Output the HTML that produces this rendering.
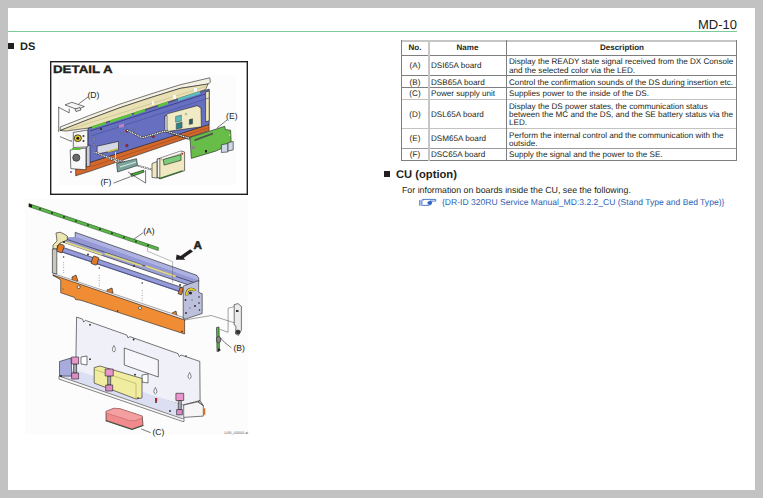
<!DOCTYPE html>
<html><head><meta charset="utf-8">
<style>
html,body{margin:0;padding:0;}
body{text-rendering:geometricPrecision;width:763px;height:498px;background:#c2c2c2;position:relative;overflow:hidden;font-family:"Liberation Sans",sans-serif;color:#231f20;}
#page{position:absolute;left:8px;top:8px;width:747px;height:482px;background:#fff;}
.a{position:absolute;white-space:nowrap;}
.hl{position:absolute;}
.t{position:absolute;white-space:nowrap;font-size:8.15px;line-height:10px;}
.tb{position:absolute;white-space:nowrap;font-size:8px;font-weight:bold;line-height:10px;}
</style></head><body>
<div id="page"></div>
<!-- header -->
<div class="a" style="left:698px;top:15px;font-size:13px;line-height:20px;">MD-10</div>
<div class="hl" style="left:8px;top:31px;width:729px;height:1px;background:#7ccb9c;"></div>

<!-- DS heading -->
<div class="hl" style="left:8px;top:43px;width:6px;height:6px;background:#231f20;"></div>
<div class="a" style="left:20px;top:39px;font-size:11px;font-weight:bold;line-height:16px;">DS</div>

<!-- table lines -->
<div class="hl" style="left:401px;top:40px;width:336px;height:2px;background:#c6c6c6;"></div>
<div class="hl" style="left:401px;top:55px;width:336px;height:1px;background:#7e7e7e;"></div>
<div class="hl" style="left:401px;top:75px;width:336px;height:1px;background:#7e7e7e;"></div>
<div class="hl" style="left:401px;top:87px;width:336px;height:1px;background:#7e7e7e;"></div>
<div class="hl" style="left:401px;top:99px;width:336px;height:1px;background:#c2c2c2;"></div>
<div class="hl" style="left:401px;top:128px;width:336px;height:1px;background:#c2c2c2;"></div>
<div class="hl" style="left:401px;top:148px;width:336px;height:1px;background:#9a9a9a;"></div>
<div class="hl" style="left:401px;top:160px;width:336px;height:1px;background:#7e7e7e;"></div>
<div class="hl" style="left:401px;top:40px;width:1px;height:121px;background:#7e7e7e;"></div>
<div class="hl" style="left:428px;top:40px;width:2px;height:121px;background:#c6c6c6;"></div>
<div class="hl" style="left:506px;top:40px;width:1px;height:121px;background:#7e7e7e;"></div>
<div class="hl" style="left:736px;top:40px;width:1px;height:121px;background:#7e7e7e;"></div>

<!-- table text -->
<div class="tb" style="left:401px;width:28px;text-align:center;top:43px;">No.</div>
<div class="tb" style="left:429px;width:77px;text-align:center;top:43px;">Name</div>
<div class="tb" style="left:507px;width:230px;text-align:center;top:43px;">Description</div>

<div class="t" style="left:401px;width:28px;text-align:center;top:61px;">(A)</div>
<div class="t" style="left:431px;top:61px;">DSI65A board</div>
<div class="t" style="left:509px;top:58px;line-height:8.8px;">Display the READY state signal received from the DX Console<br>and the selected color via the LED.</div>

<div class="t" style="left:401px;width:28px;text-align:center;top:78px;">(B)</div>
<div class="t" style="left:431px;top:78px;">DSB65A board</div>
<div class="t" style="left:509px;top:78px;">Control the confirmation sounds of the DS during insertion etc.</div>

<div class="t" style="left:401px;width:28px;text-align:center;top:89px;">(C)</div>
<div class="t" style="left:431px;top:89px;">Power supply unit</div>
<div class="t" style="left:509px;top:89px;">Supplies power to the inside of the DS.</div>

<div class="t" style="left:401px;width:28px;text-align:center;top:110px;">(D)</div>
<div class="t" style="left:431px;top:110px;">DSL65A board</div>
<div class="t" style="left:509px;top:102.5px;line-height:8.3px;">Display the DS power states, the communication status<br>between the MC and the DS, and the SE battery status via the<br>LED.</div>

<div class="t" style="left:401px;width:28px;text-align:center;top:134px;">(E)</div>
<div class="t" style="left:431px;top:134px;">DSM65A board</div>
<div class="t" style="left:509px;top:131.5px;line-height:8.3px;">Perform the internal control and the communication with the<br>outside.</div>

<div class="t" style="left:401px;width:28px;text-align:center;top:150px;">(F)</div>
<div class="t" style="left:431px;top:150px;">DSC65A board</div>
<div class="t" style="left:509px;top:150px;">Supply the signal and the power to the SE.</div>

<!-- CU section -->
<div class="hl" style="left:384px;top:171px;width:6px;height:6px;background:#231f20;"></div>
<div class="a" style="left:396px;top:167px;font-size:11.2px;font-weight:bold;line-height:16px;">CU (option)</div>
<div class="a" style="left:402px;top:184px;font-size:8.8px;line-height:12px;">For information on boards inside the CU, see the following.</div>
<div class="a" style="left:442px;top:196px;font-size:8.55px;line-height:12px;color:#2a62b5;">{DR-ID 320RU Service Manual_MD:3.2.2_CU (Stand Type and Bed Type)}</div>


<svg style="position:absolute;left:418px;top:198px" width="20" height="10" viewBox="0 0 20 10">
<rect x="1.1" y="1.9" width="3.4" height="5.9" fill="#b4c6ea"/>
<path d="M1.6 2.2 V7.6 M3.9 1.7 V8" stroke="#3f74cc" stroke-width="0.7" fill="none"/>
<path d="M4.6 1.4 H17.8 V3.1 H11.6" stroke="#3a6ec8" stroke-width="0.9" fill="none"/>
<path d="M4.6 1.4 L6 2.2 M4.6 7.4 H10.8 Q13.8 6.8 13.8 4 L12.2 3" stroke="#3a6ec8" stroke-width="0.9" fill="none"/>
<ellipse cx="11.6" cy="4.9" rx="2.2" ry="1.9" fill="#2f66c4"/>
</svg>
<!-- illustrations -->
<svg style="position:absolute;left:0;top:0" width="763" height="498" viewBox="0 0 763 498">
<rect x="58" y="75" width="178" height="110" fill="#fcfcfc"/>
<rect x="25" y="199" width="223" height="235" fill="#fcfcfc"/>
<g stroke="#1e1e1e" stroke-width="0.6" stroke-linejoin="round">
<!-- DETAIL A -->
<!-- bracket lines left -->
<polyline points="58.1,107 69.2,112.8 69.2,108.6" fill="none"/>
<line x1="58.7" y1="107" x2="58.7" y2="132"/>
<polyline points="60,136.6 71.4,141.4 71.4,132" fill="none"/>
<!-- D plate -->
<polygon points="65,104.9 71.8,102.3 84.4,106.5 77.5,109.6" fill="#f4f4f4"/>
<polygon points="75,109 80,107.5 81,110 76,111.5" fill="#e8e8e8"/>
<line x1="78.6" y1="103.9" x2="88" y2="97"/>
<!-- white frame under lid left -->
<polygon points="62,131 88,122 88,162 84,150 66,136" fill="#f6f6f6" stroke="none"/>
<!-- orange strip -->
<polygon points="75.7,169.2 90.6,162 209,124.2 209.2,130.5 90.6,171.1 75.7,175.8" fill="#d3682c"/>
<line x1="90.6" y1="166.8" x2="209" y2="127.5" stroke="#9a4a18" stroke-width="0.6"/>
<!-- blue panel -->
<polygon points="88,128.1 209.2,89.1 209.2,124.5 90.6,162.2 88,163" fill="#6770c0"/>
<polygon points="86.5,146 90,145 90,166 86.5,167" fill="#c8cce0"/>
<line x1="90" y1="131" x2="205" y2="94" stroke="#3a4490" stroke-width="1"/>
<!-- right yellow strip -->
<polygon points="205.6,92 209.2,91 209.2,120.8 205.6,121.8" fill="#efe8b8"/>
<!-- lid -->
<polygon points="60.2,127 89.6,115.4 120,104.1 150,94.2 180,84.8 209.8,77.8 210.4,82.2 208,84 180,88.4 150,97.8 120,107.7 89.6,119 60.2,130.5" fill="#f4f1e2"/>
<polygon points="60.2,130.5 89.6,119 120,107.7 150,97.8 180,88.4 208,84 205.6,89.5 88,128.1 66,131" fill="#e9e1b4"/>
<line x1="70" y1="129" x2="206" y2="86.5" stroke="#b8ae80" stroke-width="0.5"/>
<g stroke="none" fill="#5cc43a">
<polygon points="92,126.2 106,121.7 106,124.3 92,128.8"/>
<polygon points="110,120.3 132,113.2 132,115.8 110,122.9"/>
<polygon points="134,112.5 145,109 145,111.6 134,115.1"/>
<polygon points="158,104.8 168,101.6 168,104.2 158,107.4"/>
</g>
<polygon points="178,98.4 200,91.3 200,93.9 178,101" fill="#58c0c0" stroke="none"/>
<g stroke="none" fill="#f8f8f8">
<rect x="152" y="101" width="2" height="4"/><rect x="173" y="95" width="3" height="4"/><rect x="194" y="88" width="3" height="3.5"/>
</g>
<!-- window -->
<polygon points="97.1,146.2 118.5,141.4 118.5,149.8 97.1,154" fill="#d6d8e4"/>
<polygon points="108,151 118,148 118,149.8 108,152.6" fill="#c8c040" stroke="none"/>
<!-- red dots -->
<circle cx="127" cy="131" r="1.3" fill="#c02020" stroke="#222" stroke-width="0.4"/>
<line x1="91" y1="136" x2="209" y2="98" stroke="#4a52a0" stroke-width="0.7"/>
<g fill="#9a9ab0" stroke="#333" stroke-width="0.3"><circle cx="94" cy="139" r="1.2"/><circle cx="94" cy="145" r="1.1"/><circle cx="122" cy="133.5" r="0.9"/><circle cx="122" cy="143" r="0.9"/><circle cx="134" cy="129.5" r="0.9"/></g>
<circle cx="153.1" cy="136.5" r="1.3" fill="#c02020" stroke="#222" stroke-width="0.4"/>
<circle cx="126.9" cy="145.6" r="1.3" fill="#c02020" stroke="#222" stroke-width="0.4"/>
<circle cx="101" cy="129" r="1.1" fill="#3a2020" stroke="none"/>
<polygon points="119,125 124,123.5 124,127 119,128" fill="#c080c0" stroke="none"/>
<!-- left end block -->
<polygon points="73.3,132.4 87.7,130 87.7,146.9 73.3,147.5" fill="#f6f6f6"/>
<ellipse cx="77.8" cy="138.2" rx="3.6" ry="3.4" fill="#e8cc20" stroke="#222" stroke-width="0.8"/><circle cx="77.8" cy="138.2" r="1.5" fill="#2a1a1a" stroke="none"/><circle cx="83.5" cy="136" r="1" fill="#333" stroke="none"/><circle cx="83.5" cy="141" r="1" fill="#333" stroke="none"/>
<polygon points="70.2,149.9 85.9,148 85.9,169.8 70.8,168.6" fill="#f8f8f8"/>
<rect x="72" y="148" width="8.5" height="2" fill="#5cc03a" stroke="none"/>
<circle cx="76.3" cy="157.7" r="3.6" fill="#6a6a6a"/>
<circle cx="71" cy="172" r="0.9" fill="#6a4a8a" stroke="none"/>
<!-- cream power box -->
<polygon points="165,116 168,113.6 197.2,105.7 201,108 201.4,126.8 167,131.6" fill="#f0ebc4"/>
<polygon points="165,116 167,115.5 167,131.6 165,131" fill="#fafafa"/>
<polygon points="175.6,116.5 181.4,115 181.4,121 175.6,122.2" fill="#5fb8b8" stroke="#333" stroke-width="0.4"/>
<polygon points="176.2,123.5 182.1,122 182.1,128 176.2,129.3" fill="#2f7f88" stroke="#333" stroke-width="0.4"/>
<polygon points="189.3,119.6 192.6,118.8 192.6,123.8 189.3,124.6" fill="#2a5a60" stroke="#333" stroke-width="0.4"/>
<circle cx="186" cy="114" r="0.9" fill="none" stroke="#666" stroke-width="0.4"/>
<!-- cables -->
<polyline points="94.4,151.9 111.2,159.3 122,163" fill="none" stroke="#333" stroke-width="1.8"/>
<polyline points="94.4,151.9 111.2,159.3 122,163" fill="none" stroke="#fff" stroke-width="1.1" stroke-dasharray="1.2 0.6"/>
<polyline points="127,130.2 142.2,137.8 165,131 191.7,138.8" fill="none" stroke="#333" stroke-width="2"/>
<polyline points="127,130.2 142.2,137.8 165,131 191.7,138.8" fill="none" stroke="#fff" stroke-width="1.2" stroke-dasharray="1.2 0.6"/>
<polyline points="115.5,152 115.5,162" fill="none" stroke="#ddd" stroke-width="1"/>
<polyline points="104,156 130,163.5 157,171" fill="none" stroke="#444" stroke-width="1.8"/><polyline points="104,156 130,163.5 157,171" fill="none" stroke="#fff" stroke-width="1.1" stroke-dasharray="1.2 0.6"/>
<line x1="166" y1="132" x2="190" y2="140" stroke="#333" stroke-width="0.5"/>
<!-- green board E -->
<polygon points="190,137.5 224.7,126.3 225.4,129.6 230.6,130.2 231.3,144 215.5,151.2 191.3,158.4" fill="#68bd48"/>
<polygon points="194.5,139.3 213,132.6 213,134.6 194.5,141.3" fill="#4a5a4a" stroke="none"/>
<rect x="205" y="150" width="2" height="2.5" fill="#222" stroke="none"/>
<rect x="229" y="134" width="1.2" height="2" fill="#e0d040" stroke="none"/>
<rect x="192" y="146" width="3" height="3" fill="#888" stroke="none"/>
<polygon points="221.4,144.7 228,143.5 228,151.9 221.4,152.5" fill="#d0d8e8"/>
<polygon points="228,142.7 233.2,141.5 233.2,149.9 228,151" fill="#d0d8e8"/>
<line x1="217" y1="128" x2="227" y2="120"/>
<!-- board F -->
<polygon points="116.6,163.5 136.5,158.7 137.5,165.4 117.5,172" fill="#7aa49c"/>
<line x1="120" y1="167" x2="136" y2="162" stroke="#fff" stroke-width="0.8"/>
<polygon points="130.6,174.1 143.6,170.1 144.1,172.1 131.6,176.6" fill="#4cae3a"/>
<line x1="113.5" y1="183.1" x2="130.6" y2="176.6"/>
<polyline points="128,172 145.6,183.1 145.6,170.1" fill="none"/>
<!-- board D (cream w green) -->
<polygon points="152,163.5 157.3,161.5 157.3,178 152,177.5" fill="#efe8c0"/>
<polygon points="157.3,159.1 181,151 184.6,152 184.6,170.7 160.1,178.8 157.3,177.5" fill="#efe8c0"/>
<polygon points="157.3,159.1 159.8,158.4 159.8,177.9 157.3,177.5" fill="#f8f8f8"/>
<polygon points="161.5,157.8 181,151 182,153 161.5,160" fill="#ffffff" stroke="#777" stroke-width="0.4"/>
<polygon points="163.3,159.5 181,154.6 181,160.3 164.1,165.1" fill="#7ccc7c"/>
<rect x="181.5" y="153" width="1.6" height="1.6" fill="#c02020" stroke="none"/>
<line x1="159.3" y1="178.6" x2="182.6" y2="170.7" stroke="#2a6a2a" stroke-width="1.2"/>
</g>
<g font-family="Liberation Sans" font-size="8.6" fill="#231f20">
<text x="87.4" y="98">(D)</text>
<text x="226.1" y="119">(E)</text>
<text x="100.4" y="185">(F)</text>
</g>

<g stroke="#1e1e1e" stroke-width="0.6" stroke-linejoin="round">
<!-- SECOND IMAGE -->
<!-- green strip A -->
<polygon points="29,203.6 158.5,247.6 158.2,250.6 29,206.8" fill="#58b845" stroke="#1e3a1e" stroke-width="0.5"/>
<polygon points="28.8,203.8 32,204.8 32,207.6 28.8,206.8" fill="#1a1a1a" stroke="none"/>
<g fill="#1a2a1a" stroke="none" transform="translate(0,0.2)">
<circle cx="40" cy="208.7" r="0.9"/><circle cx="52" cy="212.8" r="0.9"/><circle cx="64" cy="216.8" r="0.9"/><circle cx="76" cy="220.9" r="0.9"/><circle cx="88" cy="224.9" r="0.9"/><circle cx="100" cy="229" r="0.9"/><circle cx="112" cy="233" r="0.9"/><circle cx="124" cy="237.1" r="0.9"/><circle cx="136" cy="241.2" r="0.9"/><circle cx="148" cy="245.2" r="0.9"/>
</g>
<line x1="133.9" y1="239.1" x2="143.1" y2="232.8"/>
<!-- chassis white interior -->
<polygon points="52,240 75,232 198.7,277 202,294 184.6,320.6 53,274.5" fill="#fdfdfd" stroke="none"/>
<!-- back lavender flange bar -->
<polygon points="75.2,232.3 196.8,275.3 198.7,278 198.7,282 75.2,239" fill="#aeb2e2"/>
<line x1="75.5" y1="237.6" x2="196.8" y2="280.6" stroke="#6a70b8" stroke-width="0.8"/>
<!-- upper rod -->
<polygon points="58.4,237.5 75.2,237 196.8,280 196.8,287.8 58.4,240.5" fill="#9498d4" stroke="none"/>
<polygon points="58.4,236.5 196.8,283.5 196.8,287.8 58.4,240.5" fill="#9ca2dc"/>
<!-- yellow rail -->
<polygon points="64.7,241 102.4,253.6 102.4,255.6 64.7,243" fill="#e8e080" stroke="#888" stroke-width="0.3"/>
<polygon points="104.5,252.5 142.2,265.1 142.2,267.1 104.5,254.5" fill="#e8e080" stroke="#888" stroke-width="0.3"/>
<polygon points="145.4,265.1 175.8,275.6 175.8,277.6 145.4,267.1" fill="#e8e080" stroke="#888" stroke-width="0.3"/>
<!-- left yellow bracket -->
<polygon points="56,233 60,232.2 64,234 67.3,236 67.3,240 60,243 58,249 53,249 53,245 57,241" fill="#ece6b0"/>
<!-- lower roller rod -->
<polygon points="57.3,245.5 182,287.5 182,292.5 57.3,250.5" fill="#959bd8"/>
<line x1="57.3" y1="250.2" x2="182" y2="292.2" stroke="#4a50a0" stroke-width="0.7"/>
<rect x="57.4" y="244.3" width="6" height="8" rx="1" fill="#e07a28" transform="rotate(19 60.4 248.3)"/>
<rect x="92" y="256.6" width="6" height="8" rx="1" fill="#e07a28" transform="rotate(19 95 260.6)"/>
<rect x="179.1" y="287.5" width="3.5" height="7" fill="#e07a28" transform="rotate(19 181.1 291)"/>
<!-- left frame vertical -->
<polygon points="52.4,249 56.8,249 56.8,274 52.4,273" fill="#c8c8c0"/>
<!-- small brackets / dots in interior -->
<path d="M63.6 262 V273 M99.3 275 V287 M142.2 290 V302" stroke="#444" stroke-width="0.6" stroke-dasharray="0.8 1.8" fill="none"/>
<g stroke="none" fill="#333">
<circle cx="63.6" cy="257" r="0.8"/><circle cx="99.3" cy="268" r="0.8"/><circle cx="142.2" cy="283" r="0.8"/>
<circle cx="64" cy="242" r="1"/><circle cx="88" cy="254.5" r="1"/><circle cx="134" cy="266" r="1"/><circle cx="180" cy="285" r="1"/>
</g>
<polygon points="72,277 76,275 78,281 72,282" fill="#e07a28"/>
<polygon points="107,290 112,288 113,293 107,294" fill="#e07a28"/>
<polygon points="172,313 176,311 177,316 171,317" fill="#e07a28"/>
<!-- rail above orange -->
<polygon points="53,273.4 184.6,317.8 184.6,320.6 53,276" fill="#f0f0f4" stroke="#555" stroke-width="0.5"/>
<!-- orange panel -->
<polygon points="53,275 184.6,320 184.6,334 81,300.3 75.5,299.5 74.7,297.5 60.7,292.7 60.7,279.9" fill="#f08c34"/>
<circle cx="78.7" cy="287.1" r="1.5" fill="#fff"/>
<circle cx="140" cy="308" r="1.5" fill="#fff"/>
<circle cx="63" cy="289" r="0.6" fill="#444" stroke="none"/>
<circle cx="117.7" cy="311" r="0.8" fill="#222" stroke="none"/>
<circle cx="182" cy="331.5" r="0.8" fill="#222" stroke="none"/>
<!-- right end plate -->
<polygon points="183.2,286.1 198.7,280.5 198.7,292.4 202.2,293.8 202.2,313.5 185.3,319.1 183.2,318.4" fill="#bcc0dc"/>
<path d="M187 295.5 Q186 289.5 191 289 Q194 289 194.5 291" fill="none" stroke="#222" stroke-width="2.6"/><path d="M187 295.5 Q186 289.5 191 289 Q194 289 194.5 291" fill="none" stroke="#e8d020" stroke-width="1.8"/><circle cx="190.5" cy="293" r="1.6" fill="#333" stroke="none"/>
<g stroke="none" fill="#222">
<circle cx="190" cy="293" r="1"/><circle cx="185.5" cy="300" r="0.9"/><circle cx="195" cy="306" r="0.9"/><circle cx="186" cy="313" r="0.9"/><circle cx="199" cy="297" r="0.8"/><circle cx="199" cy="303" r="0.8"/><circle cx="199.5" cy="310" r="0.8"/><circle cx="192" cy="300" r="0.5"/><circle cx="190" cy="308" r="0.5"/>
</g>
<!-- arrow A -->
<polygon points="175.9,259.8 176.6,254.5 180.6,256 190.2,249.3 193,251.5 183.6,258 185.3,259.8" fill="#231f20" stroke="none"/>
<!-- leader lines -->
<polyline points="147.5,248 147.5,251.2 172.6,261.7 172.6,282.7" fill="none" stroke="#555" stroke-width="0.4"/>
<!-- plate -->
<polygon points="76.6,317 82.5,319.1 83.7,322 85.5,320.4 126.8,335 128,338 129.8,336.6 178,353.6 179.3,356.6 181,355 199.8,361.4 200.1,400.5 183,405 75.6,376" fill="#eff0f8"/>
<polygon points="124.3,348 158.3,360 158.3,377 124.3,365" fill="#f6f6fb"/>
<path d="M113.9 345.5 q-3 5 0 6.5 q3 -1.5 0 -6.5z M155.4 387.5 q-3 5 0 6.5 q3 -1.5 0 -6.5z M189.6 372.5 q-3 5 0 6.5 q3 -1.5 0 -6.5z" fill="#fff" stroke="#333" stroke-width="0.6"/>
<g fill="#222" stroke="none"><circle cx="90" cy="324.8" r="0.9"/><circle cx="133.6" cy="339.5" r="0.9"/><circle cx="90" cy="359.2" r="0.9"/><circle cx="135" cy="374.7" r="0.9"/><circle cx="186" cy="356" r="0.8"/></g>
<!-- tray floor -->
<polygon points="59.5,376 75.6,370 183,405 182.4,418 59,376.5" fill="#dcdff2" stroke="none"/>
<!-- lavender side panel -->
<polygon points="59.5,361.5 71,358 72,376.1 59.5,376.1" fill="#a8acdc"/>
<!-- white small squares -->
<polygon points="81,357 87,356 87,365 81,364" fill="#fff"/>
<polygon points="142,375 148,374 148,383 142,382" fill="#fff"/>
<!-- yellow block -->
<polygon points="94.2,367.6 100,366 142,378.5 142,397.9 136,399 94.2,383.1" fill="#f0eca0"/>
<line x1="94.5" y1="369.5" x2="136" y2="383.5" stroke="#a09a40" stroke-width="0.5"/>
<line x1="136" y1="383.5" x2="136" y2="399" stroke="#a09a40" stroke-width="0.5"/>
<!-- base tray front -->
<polygon points="59,376.1 182.4,418.7 184,418 184,421.5 182.4,421.4 59,379.1" fill="#f8f8f8" stroke="#333" stroke-width="0.6"/>
<!-- pink cylinders -->
<g>
<rect x="73.6" y="364" width="3" height="9" fill="#a8a8b0"/>
<rect x="71.6" y="357" width="7" height="7" fill="#e896cc"/>
<rect x="71.6" y="373" width="7" height="6" fill="#dc8cc4"/>
<rect x="107.7" y="376" width="3" height="9" fill="#a8a8b0"/>
<rect x="105.2" y="369" width="8" height="7" fill="#e896cc"/>
<rect x="105.7" y="385" width="7" height="6" fill="#dc8cc4"/>
<rect x="178.3" y="400.5" width="3" height="9" fill="#a8a8b0"/>
<rect x="175.9" y="393.3" width="7.8" height="7.2" fill="#e896cc"/>
<rect x="176.6" y="409.6" width="5.8" height="5.2" fill="#dc8cc4"/>
</g>
<!-- small dark parts -->
<g stroke="none" fill="#222">
<circle cx="61" cy="376" r="1"/><circle cx="156" cy="402" r="0.9"/><circle cx="170" cy="411" r="0.9"/><circle cx="138" cy="398" r="0.8"/>
</g>
<rect x="155" y="398" width="2.2" height="3.2" fill="#c02020" stroke="none"/>
<!-- bracket right bottom -->
<polygon points="183.7,405 198,401.8 203.3,405.7 203.3,416.1 183.7,417.4" fill="#f6f6f6"/>
<polygon points="198,401.8 200.1,400.5 203.3,405.7" fill="#ccc"/>
<rect x="203.3" y="408.3" width="2" height="6.5" fill="#d87020" stroke="none"/>
<!-- pink box C -->
<polygon points="105,421 132,430 144,425.7 143,425.2 132,429.1 106,420.4" fill="#2a5a2a" stroke="none"/>
<polygon points="106,411.4 113.9,408.3 119.4,408.6 142.2,416.1 143,425.2 132,429.1 106,420.4" fill="#f08a8c"/>
<polygon points="106,411.4 113.9,408.3 119.4,408.6 142.2,416.1 142.2,418.1 134.3,420.8 129.6,420.4 106,413" fill="#f5a0a0" stroke="#a05050" stroke-width="0.4"/>
<line x1="141.3" y1="429" x2="150.7" y2="432.7"/>
<!-- B parts -->
<polyline points="184.6,320 211.3,315.5 237.8,323.9" fill="none" stroke="#333" stroke-width="0.45"/>
<path d="M234.2,306.5 L228.1,308.3 L228.1,332.3 L219.7,329.3" fill="none" stroke="#333" stroke-width="0.45"/>
<polygon points="234.2,304.6 238,303.6 241.4,306.4 241.4,330 238.5,335.4 235.5,334 236,326.3 234.2,325" fill="#ececec"/>
<circle cx="238" cy="332" r="2" fill="#333"/>
<rect x="236" y="310" width="2.5" height="2" fill="#333" stroke="none"/>
<polygon points="216.5,327.5 219,327 219.5,351 217,351.5" fill="#5ab848"/>
<ellipse cx="218.6" cy="339.6" rx="2.2" ry="3.2" fill="#888" stroke="#222"/>
<polygon points="218,348 221,350 218,351.5" fill="#222" stroke="none"/>
<line x1="225" y1="342.8" x2="231.4" y2="347.8"/>
<line x1="220.5" y1="338" x2="225" y2="342.8"/>
</g>
<g font-family="Liberation Sans" fill="#231f20">
<text x="143.2" y="234" font-size="8.6">(A)</text>
<text x="233.4" y="350.8" font-size="8.6">(B)</text>
<text x="152.4" y="435" font-size="8.6">(C)</text>
<text x="193.4" y="248.5" font-size="11.2" font-weight="bold" stroke="#231f20" stroke-width="0.55" textLength="8.4" lengthAdjust="spacingAndGlyphs">A</text>
<text x="248" y="434" font-size="3.6" fill="#555" text-anchor="end" textLength="24" lengthAdjust="spacingAndGlyphs">1200_100016.ai</text>
</g>
</svg>

<!-- DETAIL A box -->
<svg style="position:absolute;left:0;top:0" width="763" height="498"><rect x="50.7" y="61.7" width="196.6" height="132.6" fill="none" stroke="#231f20" stroke-width="1.4"/></svg>
<div class="a" style="left:53.3px;top:62px;font-size:11px;font-weight:bold;line-height:16px;transform:scaleX(1.21);transform-origin:0 0;-webkit-text-stroke:0.35px #231f20;">DETAIL A</div>

</body></html>
